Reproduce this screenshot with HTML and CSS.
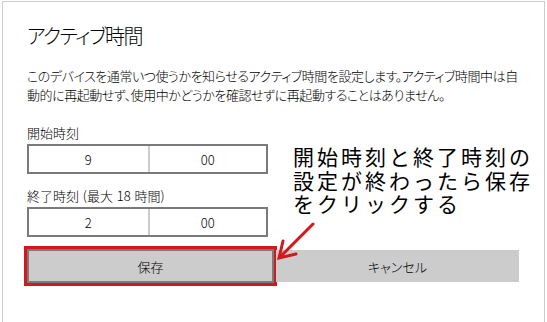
FILE: index.html
```html
<!DOCTYPE html>
<html lang="ja">
<head>
    <meta charset="UTF-8">
    <meta name="viewport" content="width=device-width, initial-scale=1.0">
    <title>アクティブ時間</title>
    <link rel="stylesheet" href="styles.css">
</head>
<body>
    <div class="dialog">
        <h1 class="title">アクティブ時間</h1>

        <p class="desc">このデバイスを通常いつ使うかを知らせるアクティブ時間を設定します。アクティブ時間中は自<br>動的に再起動せず、使用中かどうかを確認せずに再起動することはありません。</p>

        <!-- Start time -->
        <div class="label">開始時刻</div>
        <div class="time-box">
            <div class="cell">9</div>
            <div class="cell">00</div>
        </div>

        <!-- End time -->
        <div class="label">終了時刻 (最大 18 時間)</div>
        <div class="time-box">
            <div class="cell">2</div>
            <div class="cell">00</div>
        </div>

        <div class="buttons">
            <button class="btn btn-save">保存</button>
            <button class="btn">キャンセル</button>
        </div>

        <!-- Annotation over the dialog -->
        <div class="note">
            <div>開始時刻と終了時刻の</div>
            <div>設定が終わったら保存</div>
            <div>をクリックする</div>
        </div>
        <svg class="arrow" width="50" height="50" viewBox="0 0 50 50">
            <path d="M40 3 L7 36" stroke="#d3171c" stroke-width="3" fill="none" stroke-linecap="round"/>
            <path d="M10 20 L6 37 L23 33" stroke="#d3171c" stroke-width="3" fill="none" stroke-linecap="round" stroke-linejoin="miter"/>
        </svg>
    </div>
</body>
</html>
```

FILE: styles.css
```css
body {
    margin: 0;
    background-color: #fff;
    color: #000;
    font-family: "Noto Sans CJK JP", "Noto Sans", sans-serif;
    font-weight: 300;
}
.dialog {
    position: relative;
    margin: 1px 2px 0;
    height: 330px;
    padding: 20px 24px 0;
    border: 1px solid #cccccc;
    box-sizing: border-box;
}
.title {
    margin: 0;
    font-size: 20px;
    font-weight: 300;
    line-height: 28px;
    letter-spacing: -1.5px;
    font-feature-settings: "palt";
}
.desc {
    margin: 16px 0 20px;
    font-size: 13px;
    line-height: 19px;
    letter-spacing: -0.45px;
    white-space: nowrap;
    font-feature-settings: "palt";
}
.label {
    font-size: 13px;
    line-height: 18px;
    margin-bottom: 2px;
    word-spacing: 1px;
    font-feature-settings: "palt";
}
.time-box {
    display: grid;
    grid-template-columns: 1fr 1fr;
    width: 241px;
    height: 30px;
    border: 2px solid #7a7a7a;
    box-sizing: border-box;
    margin-bottom: 13px;
}
.cell {
    display: flex;
    align-items: center;
    justify-content: center;
    font-size: 13px;
}
.cell + .cell {
    border-left: 2px solid #cccccc;
}
.buttons {
    display: flex;
    gap: 2px;
    margin-top: 13px;
    width: 492px;
}
.btn {
    flex: 1;
    height: 32px;
    border: none;
    background-color: #cccccc;
    color: #000;
    font-family: inherit;
    font-weight: 300;
    font-size: 13px;
    font-feature-settings: "palt";
    padding: 0;
}
.btn-save {
    border: 2px solid #7a7a7a;
    height: 34px;
    margin-top: -1px;
    outline: 3px solid #d3171c;
}
.note {
    position: absolute;
    left: 290px;
    top: 143px;
    font-size: 21px;
    line-height: 23.5px;
    letter-spacing: 3px;
    font-weight: 400;
    color: #000;
}
.arrow {
    position: absolute;
    left: 270px;
    top: 219px;
}
```
